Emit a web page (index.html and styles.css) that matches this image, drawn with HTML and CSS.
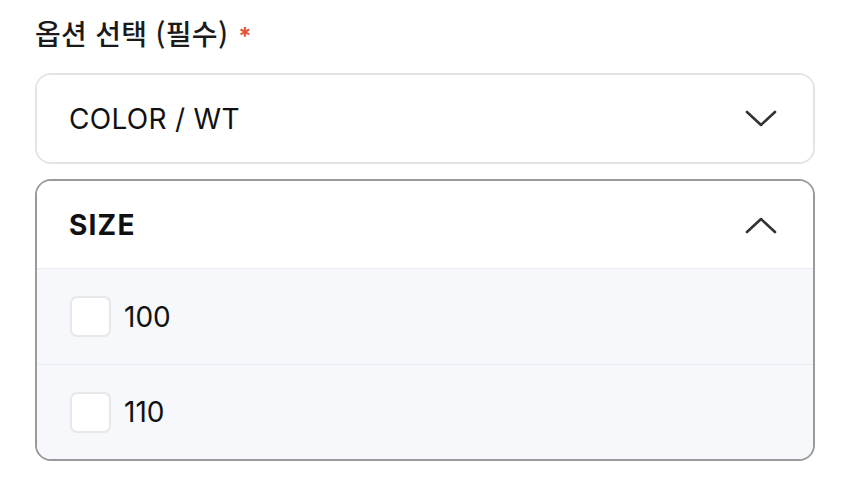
FILE: index.html
```html
<!DOCTYPE html>
<html lang="ko">
<head>
    <meta charset="UTF-8">
    <meta name="viewport" content="width=device-width, initial-scale=1.0">
    <title>옵션 선택</title>
    <link rel="stylesheet" href="styles.css">
</head>
<body>
    <div class="options">
        <h2 class="options-title">옵션 선택 (필수) <span class="required">*</span></h2>

        <!-- Closed select -->
        <div class="select">
            <div class="select-head">
                <span class="select-label">COLOR / WT</span>
                <svg class="chevron" width="32" height="18" viewBox="0 0 32 18">
                    <path d="M2 2 L16 15 L30 2" fill="none" stroke="#333" stroke-width="2.6" stroke-linecap="round" stroke-linejoin="round"/>
                </svg>
            </div>
        </div>

        <!-- Open select -->
        <div class="select open">
            <div class="select-head">
                <span class="select-label bold">SIZE</span>
                <svg class="chevron" width="32" height="18" viewBox="0 0 32 18">
                    <path d="M2 16 L16 3 L30 16" fill="none" stroke="#333" stroke-width="2.6" stroke-linecap="round" stroke-linejoin="round"/>
                </svg>
            </div>
            <label class="option">
                <span class="checkbox"></span>
                <span>100</span>
            </label>
            <label class="option">
                <span class="checkbox"></span>
                <span>110</span>
            </label>
        </div>
    </div>
</body>
</html>
```

FILE: styles.css
```css
* {
    margin: 0;
    padding: 0;
    box-sizing: border-box;
    font-family: Inter, 'Noto Sans CJK KR', sans-serif;
}

body {
    background: #fff;
    padding: 14px 35px 0 35px;
}

.options {
    width: 780px;
    display: flex;
    flex-direction: column;
}

.options-title {
    font-family: 'Noto Sans CJK KR', sans-serif;
    font-size: 28px;
    font-weight: 500;
    letter-spacing: 0.3px;
    color: #1a1a1a;
    height: 38px;
    line-height: 38px;
    margin-bottom: 21px;
}

.required {
    color: #e5533d;
    font-size: 24px;
    font-weight: 700;
    line-height: 1;
    margin-left: 2px;
}

.select {
    border: 2px solid #e4e4e4;
    border-radius: 16px;
    background: #fff;
    overflow: hidden;
    margin-bottom: 15px;
}

.select.open {
    border-color: #9a9a9a;
}

.select-head {
    height: 87px;
    display: flex;
    align-items: center;
    justify-content: space-between;
    padding: 0 36px 0 32px;
    background: #fff;
}

.select.open .select-head {
    height: 88px;
    border-bottom: 1px solid #e8ebef;
}

.select-label {
    font-size: 28px;
    color: #111;
    letter-spacing: 0.3px;
}

.select-label.bold {
    font-weight: 700;
    letter-spacing: 1.2px;
}

.option {
    height: 95px;
    display: flex;
    align-items: center;
    gap: 13px;
    padding-left: 33px;
    background: #f6f8fb;
    font-size: 28px;
    color: #111;
}

.option + .option {
    border-top: 1px solid #e8ebef;
}

.checkbox {
    width: 41px;
    height: 41px;
    border: 2px solid #e6e8eb;
    border-radius: 7px;
    background: #fff;
}
```
